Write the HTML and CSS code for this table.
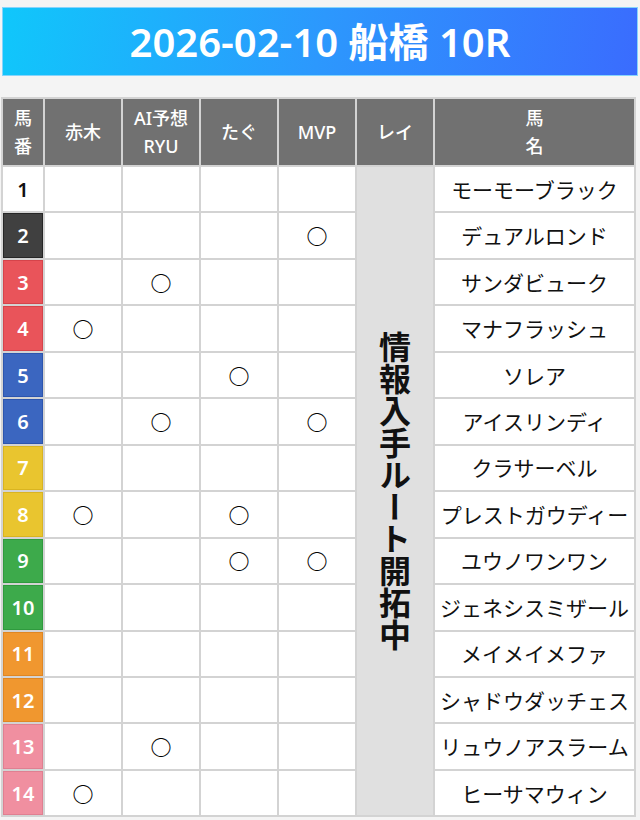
FILE: index.html
```html
<!DOCTYPE html>
<html lang="ja">
<head>
<meta charset="utf-8">
<title>2026-02-10 船橋 10R</title>
<link rel="stylesheet" href="styles.css">
</head>
<body>
<div class="page">
  <header class="banner"><h1>2026-02-10 船橋 10R</h1></header>
  <div class="table">
    <div class="th">馬<br>番</div>
    <div class="th">赤木</div>
    <div class="th">AI予想<br>RYU</div>
    <div class="th">たぐ</div>
    <div class="th">MVP</div>
    <div class="th">レイ</div>
    <div class="th">馬<br>名</div>

    <div class="rei"><span>情報入手ルート開拓中</span></div>

    <div class="num w1">1</div><div class="td"></div><div class="td"></div><div class="td"></div><div class="td"></div><div class="td name">モーモーブラック</div>
    <div class="num w2">2</div><div class="td"></div><div class="td"></div><div class="td"></div><div class="td">○</div><div class="td name">デュアルロンド</div>
    <div class="num w3">3</div><div class="td"></div><div class="td">○</div><div class="td"></div><div class="td"></div><div class="td name">サンダビューク</div>
    <div class="num w3">4</div><div class="td">○</div><div class="td"></div><div class="td"></div><div class="td"></div><div class="td name">マナフラッシュ</div>
    <div class="num w4">5</div><div class="td"></div><div class="td"></div><div class="td">○</div><div class="td"></div><div class="td name">ソレア</div>
    <div class="num w4">6</div><div class="td"></div><div class="td">○</div><div class="td"></div><div class="td">○</div><div class="td name">アイスリンディ</div>
    <div class="num w5">7</div><div class="td"></div><div class="td"></div><div class="td"></div><div class="td"></div><div class="td name">クラサーベル</div>
    <div class="num w5">8</div><div class="td">○</div><div class="td"></div><div class="td">○</div><div class="td"></div><div class="td name">プレストガウディー</div>
    <div class="num w6">9</div><div class="td"></div><div class="td"></div><div class="td">○</div><div class="td">○</div><div class="td name">ユウノワンワン</div>
    <div class="num w6">10</div><div class="td"></div><div class="td"></div><div class="td"></div><div class="td"></div><div class="td name">ジェネシスミザール</div>
    <div class="num w7">11</div><div class="td"></div><div class="td"></div><div class="td"></div><div class="td"></div><div class="td name">メイメイメファ</div>
    <div class="num w7">12</div><div class="td"></div><div class="td"></div><div class="td"></div><div class="td"></div><div class="td name">シャドウダッチェス</div>
    <div class="num w8">13</div><div class="td"></div><div class="td">○</div><div class="td"></div><div class="td"></div><div class="td name">リュウノアスラーム</div>
    <div class="num w8">14</div><div class="td">○</div><div class="td"></div><div class="td"></div><div class="td"></div><div class="td name">ヒーサマウィン</div>
  </div>
</div>
</body>
</html>
```
FILE: styles.css
```css
html, body {
  margin: 0;
  padding: 0;
}
body {
  background: #f4f4f4;
  font-family: "Noto Sans", "Noto Sans CJK JP", sans-serif;
  color: #111;
}
.page {
  width: 640px;
  padding-top: 7px;
}
.banner {
  margin: 0 2px 0 2px;
  height: 67px;
  border: 1px solid #86d4fb;
  background: linear-gradient(100deg, #10c7fb 0%, #2c98fd 50%, #3a6cfe 100%);
  display: flex;
  align-items: center;
  justify-content: center;
}
.banner h1 {
  margin: 0;
  color: #fff;
  font-size: 40px;
  font-weight: 600;
  letter-spacing: 0;
  line-height: 1;
}
.table {
  margin: 21px 0 0 1px;
  width: 631px;
  padding: 2px;
  background: #d3d3d3;
  display: grid;
  grid-template-columns: 40px 76px 76px 76px 76px 76px 199px;
  grid-template-rows: 66px repeat(14, 44.46px);
  gap: 2px;
}
.th {
  background: #717171;
  color: #fff;
  font-size: 18px;
  font-weight: 500;
  line-height: 28px;
  display: flex;
  align-items: center;
  justify-content: center;
  text-align: center;
}
.td {
  background: #fff;
  font-family: "Noto Sans CJK JP", sans-serif;
  font-size: 21px;
  font-weight: 700;
  line-height: 1;
  display: flex;
  align-items: center;
  justify-content: center;
  color: #000;
}
.name {
  grid-column: 7;
  font-size: 21px;
  font-weight: 400;
  color: #111;
  white-space: nowrap;
}
.num {
  grid-column: 1;
  box-sizing: border-box;
  border: 1px solid rgba(0,0,0,0.15);
  display: flex;
  align-items: center;
  justify-content: center;
  font-size: 20px;
  font-weight: 600;
  color: #fff;
}
.w1 { background: #fff; color: #111; border-color: #fff; }
.w2 { background: #404040; border-color: #262626; }
.w3 { background: #e9545a; border-color: #d6434a; }
.w4 { background: #3b66c0; border-color: #2c55ae; }
.w5 { background: #e9c52f; border-color: #d9b420; }
.w6 { background: #3daa4b; border-color: #2f9a3e; }
.w7 { background: #f0972f; border-color: #e08622; }
.w8 { background: #f08fa0; border-color: #e07f91; }
.rei {
  grid-column: 6;
  grid-row: 2 / span 14;
  background: #e0e0e0;
  display: flex;
  align-items: center;
  justify-content: center;
}
.rei span {
  writing-mode: vertical-rl;
  text-orientation: upright;
  font-family: "Noto Sans CJK JP", sans-serif;
  font-size: 32px;
  font-weight: 600;
  line-height: 1;
  color: #111;
}
```
